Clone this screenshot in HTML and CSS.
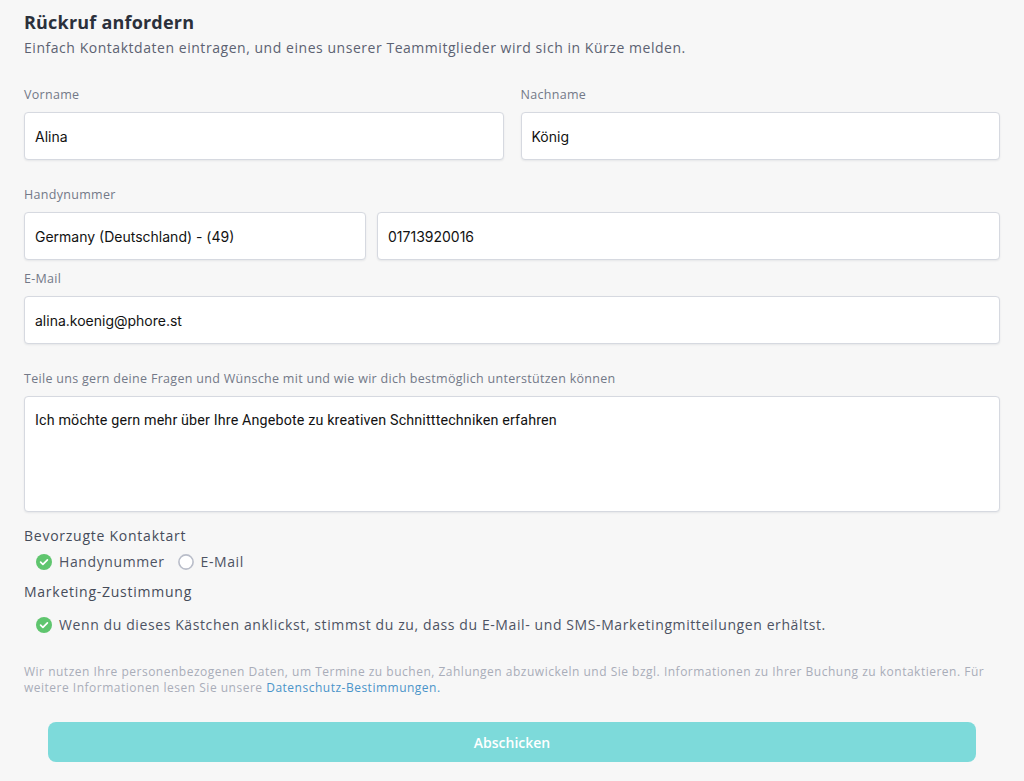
FILE: index.html
```html
<!DOCTYPE html>
<html lang="de">
<head>
    <meta charset="UTF-8">
    <title>Rückruf anfordern</title>
    <meta name="viewport" content="width=device-width, initial-scale=1.0">
    <link rel="stylesheet" href="styles.css">
</head>
<body>
    <div class="callback-form">
        <div class="form-header">
            <h1>Rückruf anfordern</h1>
            <p class="subtitle">Einfach Kontaktdaten eintragen, und eines unserer Teammitglieder wird sich in Kürze melden.</p>
        </div>

        <div class="row row-names">
            <div class="field">
                <label>Vorname</label>
                <div class="input">Alina</div>
            </div>
            <div class="field">
                <label>Nachname</label>
                <div class="input">König</div>
            </div>
        </div>

        <div class="field field-phone">
            <label>Handynummer</label>
            <div class="row row-phone">
                <div class="input">Germany (Deutschland) - (49)</div>
                <div class="input">01713920016</div>
            </div>
        </div>

        <div class="field field-mail">
            <label>E-Mail</label>
            <div class="input">alina.koenig@phore.st</div>
        </div>

        <div class="field field-message">
            <label>Teile uns gern deine Fragen und Wünsche mit und wie wir dich bestmöglich unterstützen können</label>
            <div class="input textarea">Ich möchte gern mehr über Ihre Angebote zu kreativen Schnitttechniken erfahren</div>
        </div>

        <div class="group">
            <div class="group-title">Bevorzugte Kontaktart</div>
            <div class="options">
                <span class="option">
                    <svg class="check" viewBox="0 0 16 16"><circle cx="8" cy="8" r="8" fill="#5fc56e"/><path d="M4.6 8.2l2.3 2.2 4.5-4.6" fill="none" stroke="#fff" stroke-width="1.7" stroke-linecap="round" stroke-linejoin="round"/></svg>
                    Handynummer
                </span>
                <span class="option">
                    <svg class="check" viewBox="0 0 16 16"><circle cx="8" cy="8" r="7.1" fill="#fff" stroke="#b9bdc9" stroke-width="1.6"/></svg>
                    E-Mail
                </span>
            </div>
        </div>

        <div class="group group-consent">
            <div class="group-title">Marketing-Zustimmung</div>
            <div class="options consent">
                <span class="option">
                    <svg class="check" viewBox="0 0 16 16"><circle cx="8" cy="8" r="8" fill="#5fc56e"/><path d="M4.6 8.2l2.3 2.2 4.5-4.6" fill="none" stroke="#fff" stroke-width="1.7" stroke-linecap="round" stroke-linejoin="round"/></svg>
                    Wenn du dieses Kästchen anklickst, stimmst du zu, dass du E-Mail- und SMS-Marketingmitteilungen erhältst.
                </span>
            </div>
        </div>

        <p class="privacy">Wir nutzen Ihre personenbezogenen Daten, um Termine zu buchen, Zahlungen abzuwickeln und Sie bzgl. Informationen zu Ihrer Buchung zu kontaktieren. Für weitere Informationen lesen Sie unsere <a href="#">Datenschutz-Bestimmungen.</a></p>

        <div class="actions">
            <button class="submit">Abschicken</button>
        </div>
    </div>
</body>
</html>
```

FILE: styles.css
```css
* { margin: 0; padding: 0; box-sizing: border-box; }
body {
    font-family: 'Open Sans', 'DejaVu Sans', sans-serif;
    background: #f7f7f7;
    color: #2e3340;
}
.callback-form {
    padding: 10px 24px 18px;
}
.form-header h1 {
    font-size: 18px; font-weight: 700; color: #2b303b;
    line-height: 24px; letter-spacing: 0.2px;
}
.subtitle {
    font-size: 14px; color: #5c6272; margin-top: 4px; line-height: 20px;
    letter-spacing: 0.54px;
}
.row { display: flex; }
.row-names { gap: 17px; margin-top: 29px; }
.row-names .field { flex: 1; }
.row-phone { gap: 11px; }
.row-phone .input:first-child { width: 342px; flex: none; }
.row-phone .input:last-child { flex: 1; }
.field label {
    display: block; font-size: 12.5px; color: #737988; line-height: 16px;
    margin-bottom: 9px; letter-spacing: 0.3px;
}
.field-phone { margin-top: 27px; }
.field-mail { margin-top: 11px; }
.field-message { margin-top: 27px; }
.input {
    height: 48px; background: #fff;
    border: 1px solid #d6d9e0; border-radius: 4px;
    box-shadow: 0 1px 2px rgba(30, 40, 60, 0.08);
    font-family: 'Inter', 'Roboto', sans-serif; font-size: 14px; color: #121212;
    padding: 0 10px; display: flex; align-items: center;
}
.textarea {
    height: 116px; align-items: flex-start; padding-top: 15px;
    font-family: 'Roboto', sans-serif; font-size: 14.3px; letter-spacing: 0.15px;
}
.group { margin-top: 15px; }
.group-title { font-size: 14px; color: #464c5a; line-height: 18px; letter-spacing: 0.75px; }
.options { display: flex; gap: 13px; padding-left: 12px; margin-top: 8px; }
.option {
    display: flex; align-items: center; gap: 7px;
    font-size: 14px; color: #4d5363; line-height: 18px; letter-spacing: 0.6px;
}
.check { width: 16px; height: 16px; flex: none; }
.group-consent { margin-top: 12px; }
.consent { margin-top: 15px; }
.privacy {
    margin-top: 30px;
    font-size: 12px; line-height: 16px; color: #a9adb9; letter-spacing: 0.5px;
}
.privacy a { color: #4a94c9; text-decoration: none; }
.actions { padding: 26px 24px 0; }
.submit {
    width: 100%; height: 40px; border: none; border-radius: 8px;
    background: #7ddada; color: #fff;
    font-family: 'Open Sans', sans-serif; font-size: 14px; font-weight: 600;
    cursor: pointer;
}
```
